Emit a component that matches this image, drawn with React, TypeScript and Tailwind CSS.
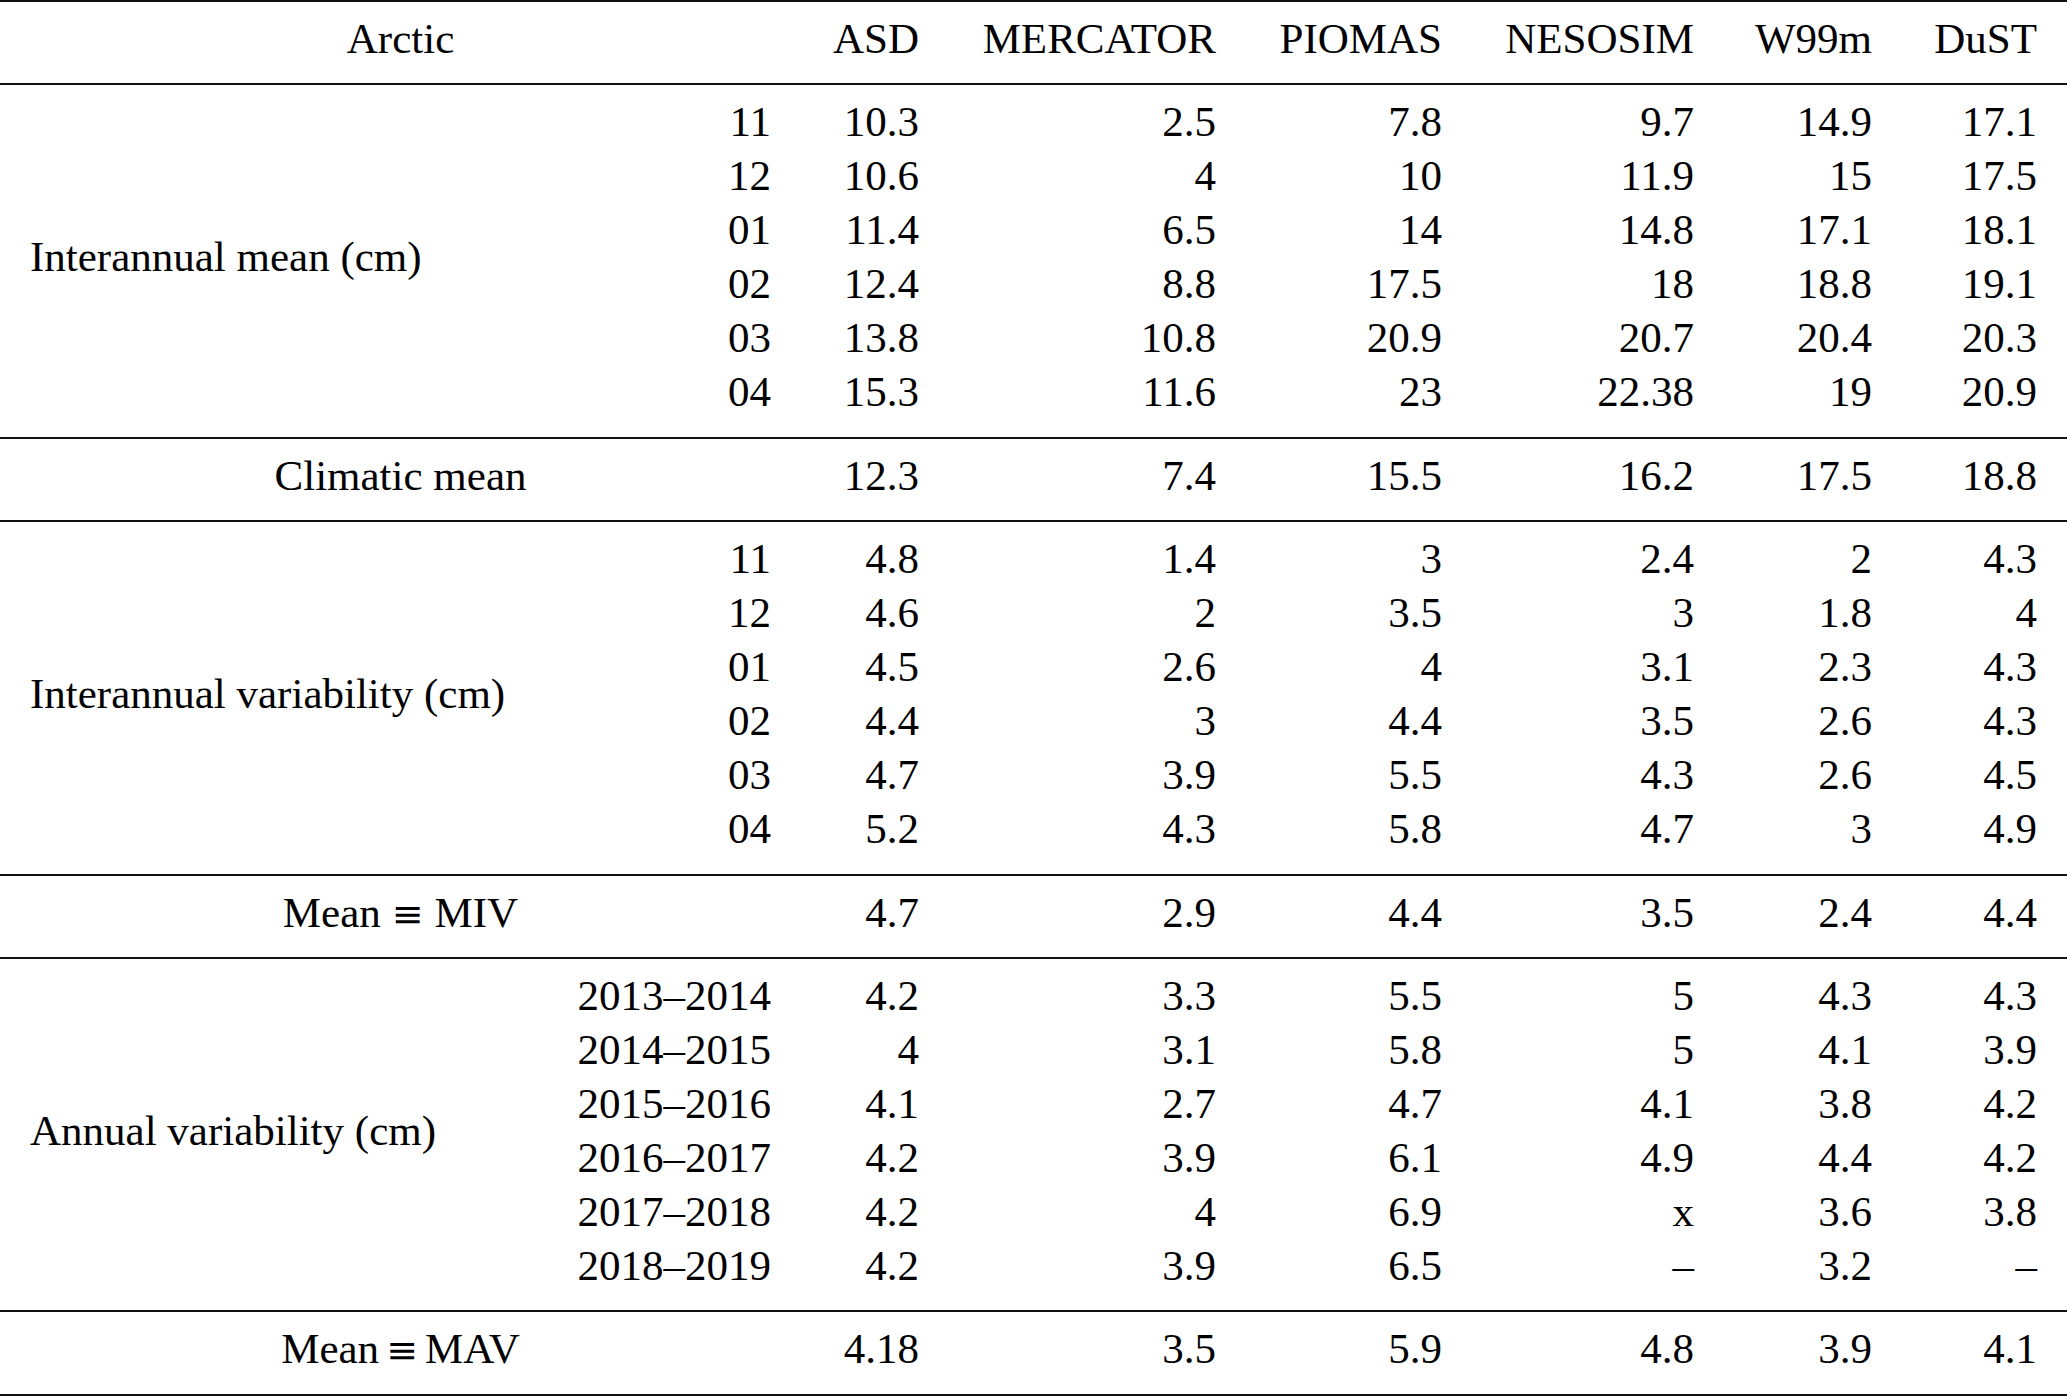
const cols = 'grid grid-cols-[545px_256px_148px_297px_226px_252px_178px_165px]'
const block = `${cols} border-t-2 border-[#111] pt-[10px] pb-[17.4px]`

type Linha = { rot: string; vals: string[] }

const interannualMean: Linha[] = [
  { rot: '11', vals: ['10.3', '2.5', '7.8', '9.7', '14.9', '17.1'] },
  { rot: '12', vals: ['10.6', '4', '10', '11.9', '15', '17.5'] },
  { rot: '01', vals: ['11.4', '6.5', '14', '14.8', '17.1', '18.1'] },
  { rot: '02', vals: ['12.4', '8.8', '17.5', '18', '18.8', '19.1'] },
  { rot: '03', vals: ['13.8', '10.8', '20.9', '20.7', '20.4', '20.3'] },
  { rot: '04', vals: ['15.3', '11.6', '23', '22.38', '19', '20.9'] },
]

const interannualVar: Linha[] = [
  { rot: '11', vals: ['4.8', '1.4', '3', '2.4', '2', '4.3'] },
  { rot: '12', vals: ['4.6', '2', '3.5', '3', '1.8', '4'] },
  { rot: '01', vals: ['4.5', '2.6', '4', '3.1', '2.3', '4.3'] },
  { rot: '02', vals: ['4.4', '3', '4.4', '3.5', '2.6', '4.3'] },
  { rot: '03', vals: ['4.7', '3.9', '5.5', '4.3', '2.6', '4.5'] },
  { rot: '04', vals: ['5.2', '4.3', '5.8', '4.7', '3', '4.9'] },
]

const annualVar: Linha[] = [
  { rot: '2013–2014', vals: ['4.2', '3.3', '5.5', '5', '4.3', '4.3'] },
  { rot: '2014–2015', vals: ['4', '3.1', '5.8', '5', '4.1', '3.9'] },
  { rot: '2015–2016', vals: ['4.1', '2.7', '4.7', '4.1', '3.8', '4.2'] },
  { rot: '2016–2017', vals: ['4.2', '3.9', '6.1', '4.9', '4.4', '4.2'] },
  { rot: '2017–2018', vals: ['4.2', '4', '6.9', 'x', '3.6', '3.8'] },
  { rot: '2018–2019', vals: ['4.2', '3.9', '6.5', '–', '3.2', '–'] },
]

function Cell({ children }: { children: React.ReactNode }) {
  return <div className="pr-[30px] text-right whitespace-nowrap">{children}</div>
}

// bloco com rótulo multirow à esquerda
function Grupo({ titulo, linhas }: { titulo: string; linhas: Linha[] }) {
  return (
    <div className={block}>
      <div className="row-span-6 flex items-center pl-[30px] whitespace-nowrap">{titulo}</div>
      {linhas.map((l) => (
        <Row key={l.rot} rot={l.rot} vals={l.vals} />
      ))}
    </div>
  )
}

function Row({ rot, vals }: { rot: string; vals: string[] }) {
  return (
    <>
      <Cell>{rot}</Cell>
      {vals.map((v, i) => <Cell key={i}>{v}</Cell>)}
    </>
  )
}

// linha única com rótulo centrado sobre as duas primeiras colunas
function Resumo({ titulo, vals }: { titulo: React.ReactNode; vals: string[] }) {
  return (
    <div className={block}>
      <div className="col-span-2 h-[54px] text-center whitespace-nowrap">{titulo}</div>
      {vals.map((v, i) => <Cell key={i}>{v}</Cell>)}
    </div>
  )
}

function Equiv({ largo }: { largo?: boolean }) {
  return (
    <span className={`font-['DejaVu_Serif',serif] text-[38px] leading-none ${largo ? 'mx-[11px]' : 'mx-[7px]'}`}>≡</span>
  )
}

export default function App() {
  return (
    <div className="w-[2067px] min-h-[1396px] bg-white text-black font-['Liberation_Serif','Times_New_Roman',serif] text-[43px] leading-[54px]">
      <Resumo titulo="Arctic" vals={['ASD', 'MERCATOR', 'PIOMAS', 'NESOSIM', 'W99m', 'DuST']} />
      <Grupo titulo="Interannual mean (cm)" linhas={interannualMean} />
      <Resumo titulo="Climatic mean" vals={['12.3', '7.4', '15.5', '16.2', '17.5', '18.8']} />
      <Grupo titulo="Interannual variability (cm)" linhas={interannualVar} />
      <Resumo
        titulo={<>Mean<Equiv largo />MIV</>}
        vals={['4.7', '2.9', '4.4', '3.5', '2.4', '4.4']}
      />
      <Grupo titulo="Annual variability (cm)" linhas={annualVar} />
      <div className="border-b-2 border-[#111]">
        <Resumo
          titulo={<>Mean<Equiv />MAV</>}
          vals={['4.18', '3.5', '5.9', '4.8', '3.9', '4.1']}
        />
      </div>
    </div>
  )
}
